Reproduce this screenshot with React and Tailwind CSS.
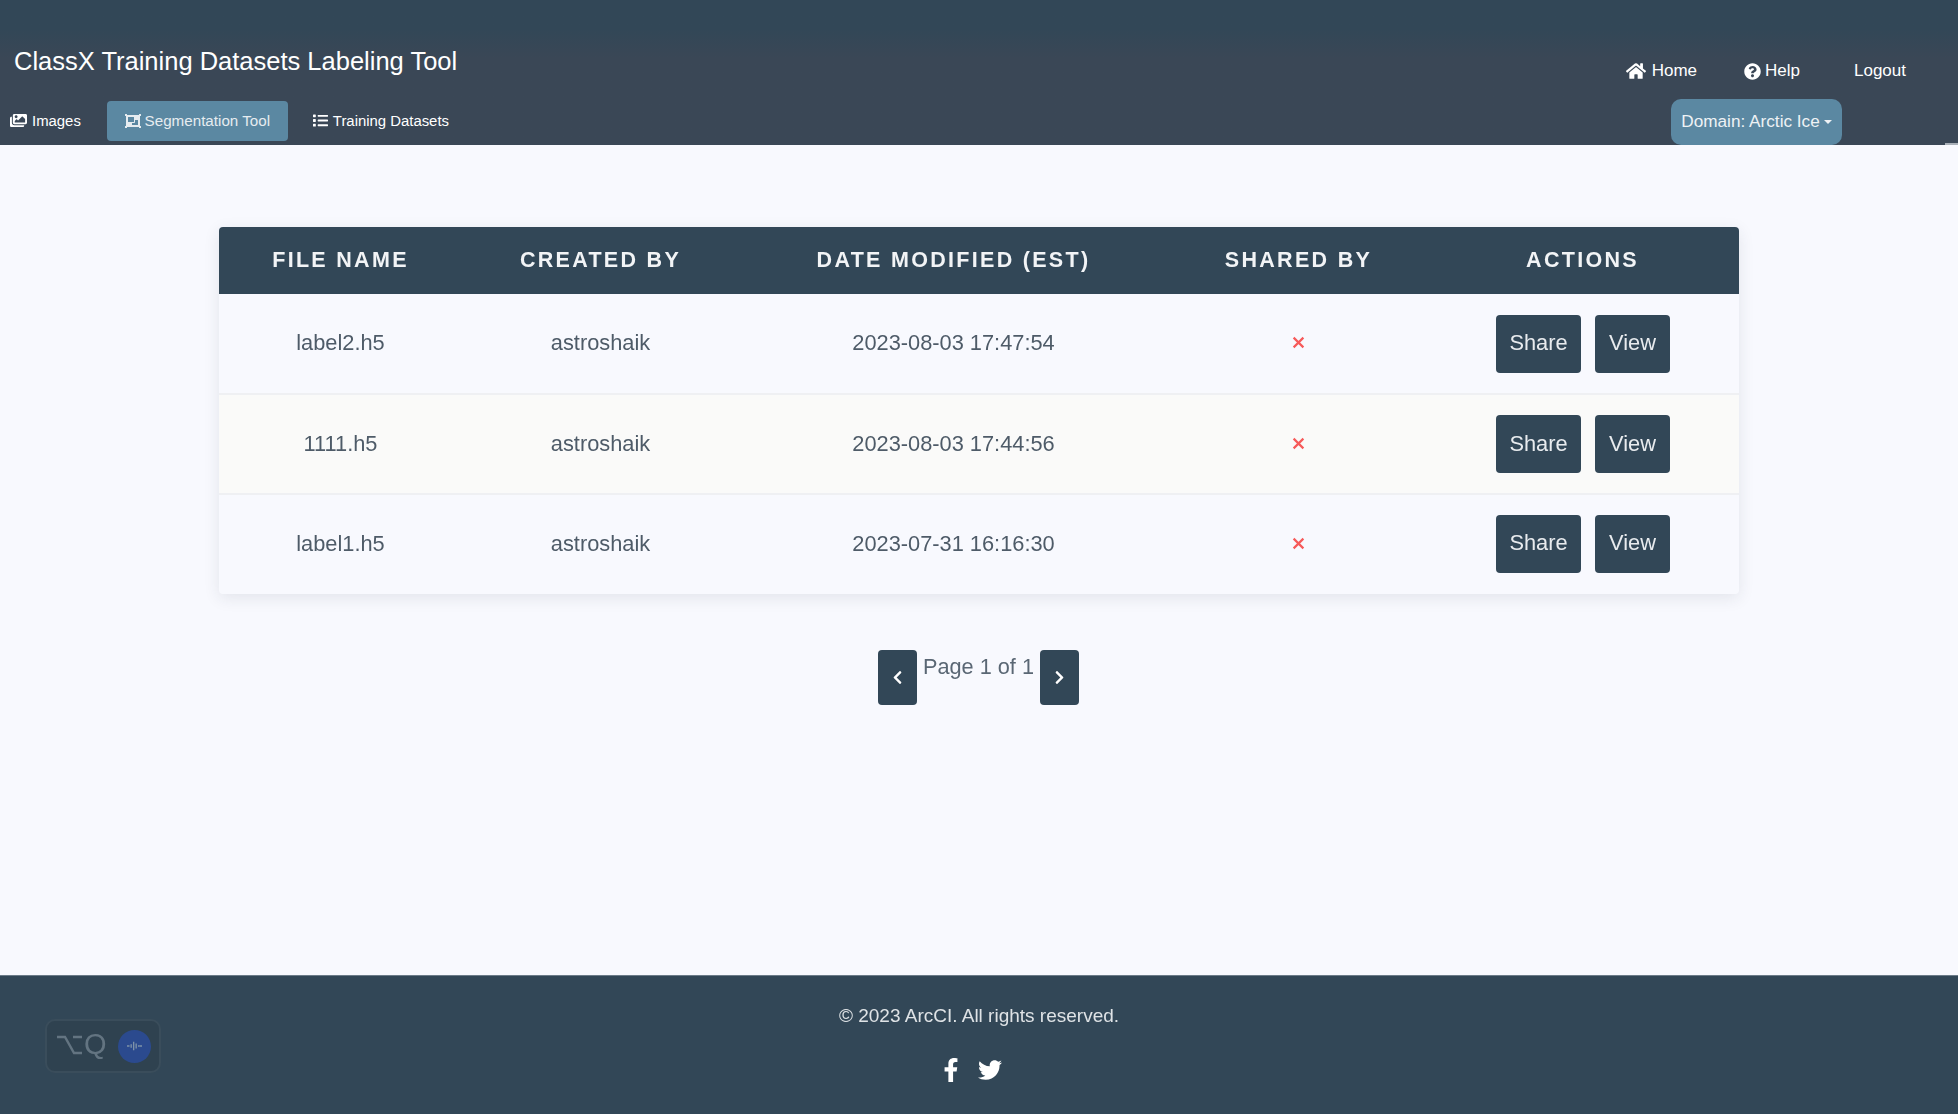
import { FaHome, FaQuestionCircle, FaImages, FaList, FaFacebookF, FaTwitter, FaChevronLeft, FaChevronRight, FaObjectGroup } from "react-icons/fa";

const files = [
    { name: "label2.h5", by: "astroshaik", date: "2023-08-03 17:47:54" },
    { name: "1111.h5", by: "astroshaik", date: "2023-08-03 17:44:56" },
    { name: "label1.h5", by: "astroshaik", date: "2023-07-31 16:16:30" },
];

function CrossMark() {
    return (
        <svg viewBox="0 0 12 12" className="w-[13px] h-[13px] mx-auto -mt-[2px]" stroke="#f65a5a" strokeWidth="2">
            <path d="M1.5 1.5 L10.5 10.5 M10.5 1.5 L1.5 10.5" />
        </svg>
    );
}

function Header() {
    return (
        <header className="relative h-[145px] bg-gradient-to-b from-[#324757] from-20% to-[#3a4756] to-40% text-white flex flex-col">
            <div className="flex justify-between items-start">
                <h1 className="mt-[47px] ml-[14px] text-[25.5px] leading-[28px] text-white">
                    ClassX Training Datasets Labeling Tool
                </h1>
                <nav className="mt-[61px] mr-[52px] flex items-center text-[17px] leading-[20px]">
                    <a className="flex items-center gap-[6px]"><FaHome className="text-[20px]" /> Home</a>
                    <a className="ml-[47px] flex items-center gap-[4px]"><FaQuestionCircle className="text-[17px]" /> Help</a>
                    <a className="ml-[54px]">Logout</a>
                </nav>
            </div>
            <div className="mt-auto flex justify-between items-end">
                <div className="flex items-center text-[14.9px] mb-[4px] ml-[10px]">
                    <a className="flex items-center gap-[5px]"><FaImages className="text-[17px]" /> Images</a>
                    <a className="ml-[26px] h-[40px] w-[181px] rounded-[4px] bg-[#5b88a2] text-[#e6ecf0] text-[15.2px] flex items-center justify-center gap-[4px]">
                        <FaObjectGroup className="text-[16px]" /> Segmentation Tool
                    </a>
                    <a className="ml-[25px] flex items-center gap-[5px]"><FaList className="text-[15px]" /> Training Datasets</a>
                </div>
                <button className="mr-[116px] h-[46px] w-[171px] rounded-[10px] bg-[#5b88a2] text-[#eef2f5] text-[17.2px] flex items-center justify-center gap-[4px]">
                    Domain: Arctic Ice
                    <span className="border-x-[4px] border-x-transparent border-t-[4px] border-t-[#eef2f5]" />
                </button>
            </div>
            <span className="absolute right-0 bottom-0 w-[13px] h-[2px] bg-[#a9b0b8]" />
        </header>
    );
}

function FileTable() {
    return (
        <table className="w-[1520px] table-fixed border-collapse bg-[#f8f9fe] rounded-[4px] shadow-[0_4px_16px_rgba(40,50,70,0.10)]">
            <colgroup>
                <col className="w-[244px]" />
                <col className="w-[276px]" />
                <col className="w-[430px]" />
                <col className="w-[260px]" />
                <col className="w-[310px]" />
            </colgroup>
            <thead>
                <tr className="h-[67px] bg-[#324757] text-[#f2f4f6] text-[21.5px] tracking-[2.3px] font-bold">
                    <th className="rounded-tl-[4px]">FILE NAME</th>
                    <th>CREATED BY</th>
                    <th>DATE MODIFIED (EST)</th>
                    <th>SHARED BY</th>
                    <th className="rounded-tr-[4px] pr-[2px]">ACTIONS</th>
                </tr>
            </thead>
            <tbody className="text-[21.8px] text-[#4e5b68] text-center">
                {files.map((file, i) => (
                    <tr key={file.name} className={`h-[100px] ${i === 1 ? "bg-[#fafaf9]" : ""} ${i < 2 ? "border-b-2 border-[#eff0f3]" : ""}`}>
                        <td>{file.name}</td>
                        <td>{file.by}</td>
                        <td>{file.date}</td>
                        <td><CrossMark /></td>
                        <td>
                            <div className={`flex justify-center gap-[14px] pr-[1px] ${i === 2 ? "mb-[2px]" : ""}`}>
                                <button className="w-[85px] h-[58px] rounded-[4px] bg-[#324757] text-[#e8ebee]">Share</button>
                                <button className="w-[75px] h-[58px] rounded-[4px] bg-[#324757] text-[#e8ebee]">View</button>
                            </div>
                        </td>
                    </tr>
                ))}
            </tbody>
        </table>
    );
}

function Pagination() {
    return (
        <div className="mt-[56px] flex items-start justify-center gap-[6px] text-[21.7px] text-[#5a6774]">
            <button className="w-[39px] h-[55px] rounded-[4px] bg-[#324757] text-white flex items-center justify-center"><FaChevronLeft className="text-[15px]" /></button>
            <span className="mt-[3px] leading-[28px]">Page 1 of 1</span>
            <button className="w-[39px] h-[55px] rounded-[4px] bg-[#324757] text-white flex items-center justify-center"><FaChevronRight className="text-[15px]" /></button>
        </div>
    );
}

function Footer() {
    return (
        <footer className="relative h-[139px] bg-[#324757] border-t border-[#6b7b88] flex flex-col items-center text-[#dfe3e6]">
            <p className="mt-[28px] text-[19px] leading-[24px] blur-[0.4px]">© 2023 ArcCI. All rights reserved.</p>
            <div className="mt-[30px] pr-[18px] flex items-center gap-[15px] text-white text-[24px] blur-[0.4px]">
                <FaFacebookF />
                <FaTwitter />
            </div>
            {/* floating shortcut badge */}
            <div className="absolute left-[45px] top-[43px] w-[116px] h-[54px] rounded-[10px] bg-[#2f4250] border-2 border-[#3a4d5b] flex items-center pl-[10px] pr-[8px] blur-[0.5px]">
                <svg viewBox="0 0 26 20" className="w-[26px] h-[20px] -mt-[3px]" stroke="#637481" strokeWidth="2.4" fill="none">
                    <path d="M0 2h8l9 16h8M16 2h9" />
                </svg>
                <span className="ml-[1px] -mt-[3px] text-[29px] leading-none text-[#637481]">Q</span>
                <span className="ml-auto w-[33px] h-[33px] rounded-full bg-[#2b4a8e] flex items-center justify-center">
                    <svg viewBox="0 0 20 12" className="w-[17px] h-[10px]" stroke="#7f93a8" strokeWidth="1.6" fill="none">
                        <path d="M1 6h3M6 4v4M9 1v10M12 3v6M15 5v2M16 6h3" />
                    </svg>
                </span>
            </div>
        </footer>
    );
}

export default function App() {
    return (
        <div className="min-h-[1114px] flex flex-col bg-[#f8f9fe] font-['Liberation_Sans',Arial,sans-serif]">
            <Header />
            <main className="flex-1 pt-[82px] flex flex-col items-center pr-[1px] blur-[0.5px]">
                <FileTable />
                <Pagination />
            </main>
            <Footer />
        </div>
    );
}
